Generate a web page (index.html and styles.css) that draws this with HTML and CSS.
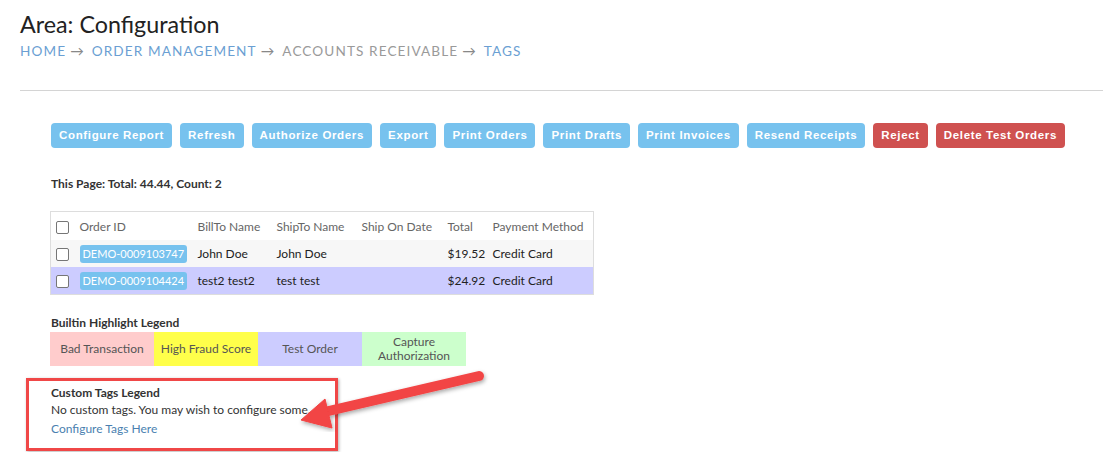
FILE: index.html
```html
<!DOCTYPE html>
<html>
<head>
<meta charset="utf-8">
<link rel="stylesheet" href="styles.css">
</head>
<body>
<div class="page">
  <h1 class="title">Area: Configuration</h1>
  <div class="crumbs">
    <a class="crumb">HOME</a><span class="arr">&rarr;</span><a class="crumb">ORDER MANAGEMENT</a><span class="arr">&rarr;</span><span class="crumb current">ACCOUNTS RECEIVABLE</span><span class="arr">&rarr;</span><a class="crumb">TAGS</a>
  </div>
  <hr class="rule">
  <div class="content">
    <div class="toolbar">
      <button class="btn">Configure Report</button>
      <button class="btn">Refresh</button>
      <button class="btn">Authorize Orders</button>
      <button class="btn">Export</button>
      <button class="btn">Print Orders</button>
      <button class="btn">Print Drafts</button>
      <button class="btn">Print Invoices</button>
      <button class="btn">Resend Receipts</button>
      <button class="btn danger">Reject</button>
      <button class="btn danger">Delete Test Orders</button>
    </div>
    <p class="summary">This Page: Total: 44.44, Count: 2</p>
    <table class="orders">
      <colgroup>
        <col class="c-cb"><col class="c-id"><col class="c-bill"><col class="c-ship"><col class="c-date"><col class="c-total"><col class="c-pay">
      </colgroup>
      <thead>
        <tr><th><span class="cb"></span></th><th>Order ID</th><th>BillTo Name</th><th>ShipTo Name</th><th>Ship On Date</th><th>Total</th><th>Payment Method</th></tr>
      </thead>
      <tbody>
        <tr class="row-plain"><td><span class="cb"></span></td><td><span class="tag">DEMO-0009103747</span></td><td>John Doe</td><td>John Doe</td><td></td><td>$19.52</td><td>Credit Card</td></tr>
        <tr class="row-test"><td><span class="cb"></span></td><td><span class="tag">DEMO-0009104424</span></td><td>test2 test2</td><td>test test</td><td></td><td>$24.92</td><td>Credit Card</td></tr>
      </tbody>
    </table>
    <div class="legend-title">Builtin Highlight Legend</div>
    <div class="legend">
      <div class="swatch bad">Bad Transaction</div>
      <div class="swatch fraud">High Fraud Score</div>
      <div class="swatch test">Test Order</div>
      <div class="swatch capture">Capture<br>Authorization</div>
    </div>
    <div class="custom">
      <div class="custom-title">Custom Tags Legend</div>
      <div class="custom-text">No custom tags. You may wish to configure some.</div>
      <a class="custom-link">Configure Tags Here</a>
    </div>
  </div>
</div>
<div class="annot-box"></div>
<svg class="annot-arrow" width="220" height="70" viewBox="0 0 220 70">
  <defs>
    <filter id="sh" x="-20%" y="-40%" width="140%" height="180%">
      <feDropShadow dx="1" dy="2" stdDeviation="2" flood-color="#000" flood-opacity="0.35"/>
    </filter>
  </defs>
  <g filter="url(#sh)" fill="#f24444" stroke="#f24444">
    <line x1="199" y1="14" x2="40" y2="51" stroke-width="10" stroke-linecap="round"/>
    <polygon points="21,58 45,37 52,66" stroke-width="1" stroke-linejoin="round"/>
  </g>
</svg>
</body>
</html>
```
FILE: styles.css
```css
html, body {
  margin: 0;
  padding: 0;
  background: #fff;
}
body {
  font-family: Lato, "Open Sans", sans-serif;
  color: #222;
  position: relative;
  min-height: 452px;
}
.page {
  padding: 10px 0 0 20px;
}
.title {
  margin: 0;
  font-size: 23.3px;
  font-weight: normal;
  line-height: 28px;
  color: #222;
}
.crumbs {
  margin-top: 4px;
  font-size: 13.6px;
  letter-spacing: 1.1px;
  line-height: 18px;
  color: #999;
}
.crumb {
  color: #6b9fd3;
  text-decoration: none;
}
.crumb.current {
  color: #9a9a9a;
}
.arr {
  color: #888;
  letter-spacing: 0;
  margin: 0 8px 0 4px;
}
.rule {
  margin: 30px 0 0 0;
  border: 0;
  border-top: 1px solid #d4d4d4;
  height: 0;
}
.content {
  padding: 32px 0 0 31px;
}
.toolbar {
  display: flex;
  gap: 8px;
}
.btn {
  font-family: "Liberation Sans", Arial, sans-serif;
  font-weight: bold;
  font-size: 11.5px;
  letter-spacing: 0.66px;
  color: #fff;
  background: #77c2ee;
  border: 0;
  border-radius: 4px;
  height: 25px;
  padding: 0 8px;
  line-height: 25px;
}
.btn.danger {
  background: #cf5150;
}
.summary {
  margin: 28px 0 0 0;
  font-size: 12px;
  font-weight: bold;
  color: #333;
  line-height: 16px;
}
.orders {
  margin: 19px 0 0 -1px;
  border-collapse: collapse;
  table-layout: fixed;
  width: 543px;
  border: 1px solid #ddd;
  font-size: 12px;
}
.c-cb { width: 25px; }
.c-id { width: 118px; }
.c-bill { width: 79px; }
.c-ship { width: 85px; }
.c-date { width: 86px; }
.c-total { width: 45px; }
.c-pay { width: 105px; }
.orders th {
  text-align: left;
  font-weight: normal;
  color: #666;
  height: 28px;
  padding: 0 0 0 4px;
  background: #fff;
}
.orders td {
  height: 27px;
  padding: 0 0 0 4px;
  color: #222;
  white-space: nowrap;
}
.orders th:first-child, .orders td:first-child {
  padding-left: 5px;
}
.row-plain { background: #f7f7f7; }
.row-test { background: #ccccff; }
.cb {
  display: inline-block;
  width: 11px;
  height: 11px;
  border: 1px solid #767676;
  border-radius: 2px;
  background: #fff;
  vertical-align: middle;
}
.tag {
  display: inline-block;
  background: #77c2ee;
  color: #fff;
  border-radius: 3px;
  padding: 2px 3px;
  line-height: 14px;
  font-size: 11px;
}
.legend-title {
  margin-top: 20px;
  font-size: 12px;
  font-weight: bold;
  color: #333;
  line-height: 16px;
}
.legend {
  display: flex;
  margin: 1px 0 0 -1px;
}
.swatch {
  width: 104px;
  height: 34px;
  display: flex;
  align-items: center;
  justify-content: center;
  text-align: center;
  font-size: 12px;
  line-height: 14px;
  color: #555;
}
.swatch.bad { background: #ffcccc; }
.swatch.fraud { background: #ffff4a; }
.swatch.test { background: #ccccff; }
.swatch.capture { background: #ccffcc; }
.custom {
  margin-top: 18px;
  font-size: 12px;
  line-height: 17px;
}
.custom-title {
  font-weight: bold;
  color: #333;
}
.custom-text {
  color: #333;
}
.custom-link {
  display: block;
  margin-top: 2px;
  color: #4a7fb0;
  text-decoration: none;
}
.annot-box {
  position: absolute;
  left: 26px;
  top: 378px;
  width: 306px;
  height: 67px;
  border: 3px solid #f04747;
  box-shadow: 1px 1px 3px rgba(0,0,0,0.3);
}
.annot-arrow {
  position: absolute;
  left: 280px;
  top: 362px;
}
```
